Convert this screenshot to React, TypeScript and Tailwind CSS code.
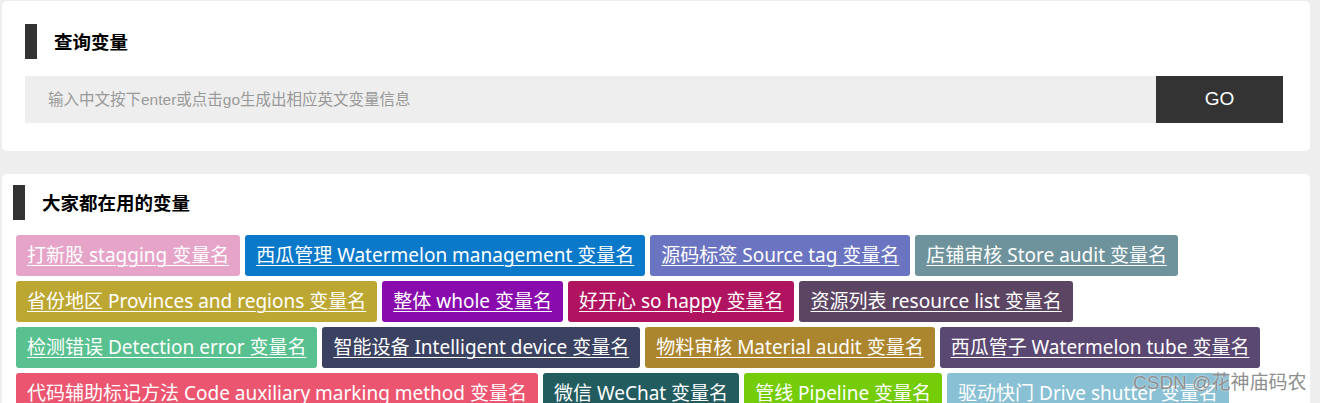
import React from "react";

const rows: { t: string; c: string }[][] = [
  [
    { t: "打新股 stagging 变量名", c: "bg-[#e5a4c8]" },
    { t: "西瓜管理 Watermelon management 变量名", c: "bg-[#0b79c9]" },
    { t: "源码标签 Source tag 变量名", c: "bg-[#6b74c0]" },
    { t: "店铺审核 Store audit 变量名", c: "bg-[#6e939c]" },
  ],
  [
    { t: "省份地区 Provinces and regions 变量名", c: "bg-[#bda733]" },
    { t: "整体 whole 变量名", c: "bg-[#8a0bad]" },
    { t: "好开心 so happy 变量名", c: "bg-[#b01460]" },
    { t: "资源列表 resource list 变量名", c: "bg-[#5c4563]" },
  ],
  [
    { t: "检测错误 Detection error 变量名", c: "bg-[#58c18f]" },
    { t: "智能设备 Intelligent device 变量名", c: "bg-[#3b4261]" },
    { t: "物料审核 Material audit 变量名", c: "bg-[#ac862e]" },
    { t: "西瓜管子 Watermelon tube 变量名", c: "bg-[#5b4872]" },
  ],
  [
    { t: "代码辅助标记方法 Code auxiliary marking method 变量名", c: "bg-[#ec5570]" },
    { t: "微信 WeChat 变量名", c: "bg-[#225c5f]" },
    { t: "管线 Pipeline 变量名", c: "bg-[#75cc08]" },
    { t: "驱动快门 Drive shutter 变量名", c: "bg-[#89c0d4]" },
  ],
];

export default function App() {
  return (
    <div className="relative w-[1320px] h-[403px] overflow-hidden bg-[#eeeeee] pt-[1px] pl-[2px] pr-[10px]">
      <div className="bg-white rounded-[5px] h-[150px] pt-[23px] pl-[23px] pr-[27px]">
        <div className="flex items-center h-[35px]">
          <div className="w-[12px] h-[35px] bg-[#333333]" />
          <div className="ml-[17px] text-[18.5px] font-bold text-black [font-family:'Noto_Sans_CJK_SC',sans-serif]">
            查询变量
          </div>
        </div>
        <div className="flex mt-[17px] h-[47px]">
          <div className="flex-1 bg-[#eeeeee] flex items-center pl-[23px] text-[15.5px] text-[#999999] [font-family:'Liberation_Sans','Noto_Sans_CJK_SC',sans-serif]">
            输入中文按下enter或点击go生成出相应英文变量信息
          </div>
          <div className="w-[127px] bg-[#333333] flex items-center justify-center text-white text-[19px] [font-family:'Liberation_Sans',sans-serif]">
            GO
          </div>
        </div>
      </div>
      <div className="bg-white rounded-[5px] mt-[23px] h-[260px] pt-[11px] pl-[11px] pr-[14px]">
        <div className="flex items-center h-[35px]">
          <div className="w-[12px] h-[35px] bg-[#333333]" />
          <div className="ml-[17px] text-[18.5px] font-bold text-black [font-family:'Noto_Sans_CJK_SC',sans-serif]">
            大家都在用的变量
          </div>
        </div>
        <div className="mt-[15px] ml-[3px] flex flex-col gap-[5px]">
          {rows.map((r, i) => (
            <div key={i} className="flex gap-[5px]">
              {r.map((x) => (
                <a
                  key={x.t}
                  href="#"
                  className={`${x.c} h-[41px] rounded-[3px] px-[11px] flex items-center text-white underline underline-offset-[3px] decoration-1 text-[19px] whitespace-nowrap [font-family:'Noto_Sans','Noto_Sans_CJK_SC',sans-serif]`}
                >
                  {x.t}
                </a>
              ))}
            </div>
          ))}
        </div>
      </div>
      <div className="absolute left-[1133px] top-[371px] text-[19px] leading-[24px] text-[#8f8f8f] [text-shadow:0_0_2px_rgba(255,255,255,0.9)] [font-family:'Liberation_Sans','Noto_Sans_CJK_SC',sans-serif]">
        CSDN @花神庙码农
      </div>
    </div>
  );
}
